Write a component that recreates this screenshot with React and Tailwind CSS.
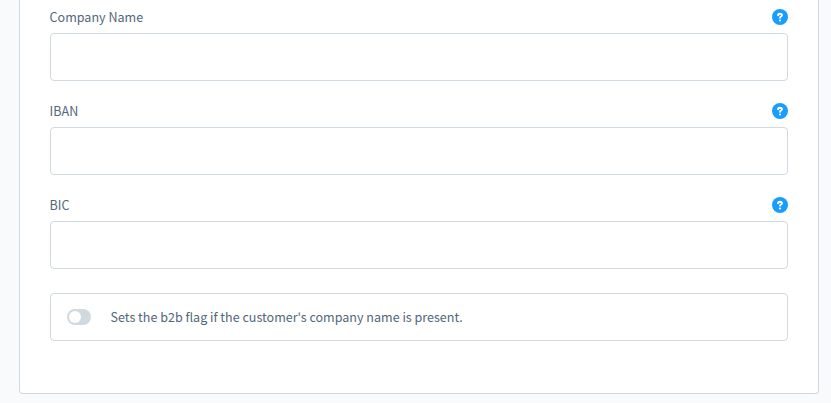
const FIELDS = [
  { id: 'company', label: 'Company Name' },
  { id: 'iban', label: 'IBAN' },
  { id: 'bic', label: 'BIC' },
]

function HelpIcon() {
  return (
    <svg className="size-4" viewBox="0 0 16 16" fill="none">
      <circle cx="8" cy="8" r="8" fill="#189eff" />
      <path
        d="M6.1 6.2C6.1 5.2 6.9 4.7 8 4.7s2 .6 2 1.6c0 1.2-2 1.2-2 2.4"
        stroke="#fff"
        strokeWidth="1.9"
        strokeLinecap="round"
      />
      <circle cx="8" cy="11.5" r="1.1" fill="#fff" />
    </svg>
  )
}

function Field({ id, label }) {
  return (
    <div>
      <div className="mb-2 flex h-4 items-center justify-between">
        <label htmlFor={id} className="-ml-[0.4px] leading-4">{label}</label>
        <HelpIcon />
      </div>
      <input
        id={id}
        type="text"
        className="block h-12 w-full rounded border border-[#d1d9e0] bg-white px-4 outline-none"
      />
    </div>
  )
}

export default function App() {
  return (
    <div className="h-[403px] overflow-hidden bg-[#f9fafb] pl-[19px] pr-3 font-['Noto_Sans_CJK_SC',sans-serif] text-[12.54px] text-[#52667a]">
      <div className="h-[394px] rounded-b border border-t-0 border-[#d1d9e0] bg-white px-[30px] pt-[9px]">
        <div className="mb-6 flex flex-col gap-[22px]">
          {FIELDS.map((field) => (
            <Field key={field.id} id={field.id} label={field.label} />
          ))}
        </div>

        {/* B2B switch */}
        <div className="flex h-12 items-center rounded border border-[#d1d9e0] px-4">
          <button
            type="button"
            role="switch"
            aria-checked="false"
            className="flex h-4 w-6 items-center rounded-full bg-[#d1d9e0] pl-0.5"
          >
            <span className="size-3 rounded-full bg-white" />
          </button>
          <span className="ml-[19.6px] leading-4">Sets the b2b flag if the customer's company name is present.</span>
        </div>
      </div>
    </div>
  )
}
